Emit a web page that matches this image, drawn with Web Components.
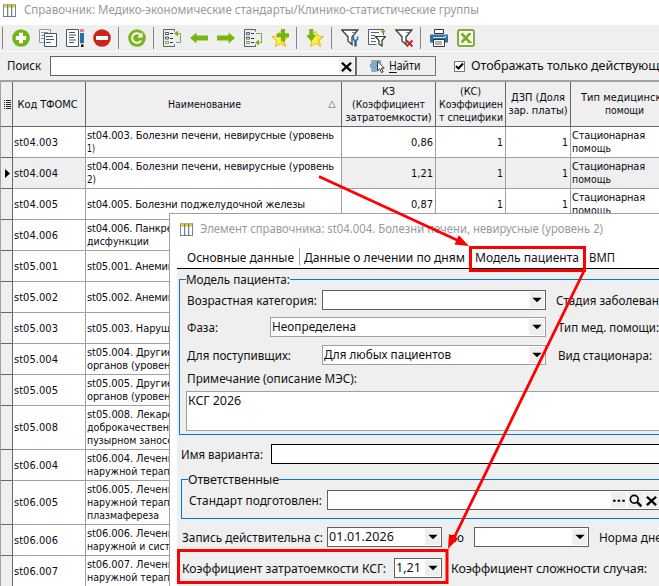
<!DOCTYPE html>
<html lang="ru">
<head>
<meta charset="utf-8">
<title>Справочник</title>
<style>
html,body{margin:0;height:100%;overflow:hidden;background:#fff}
</style>
</head>
<body>
<ref-app></ref-app>
<script>
/* Text run adjusted to a given width: tracked out when short, condensed when long */
class FitText extends HTMLElement{
  constructor(){
    super();
    this.attachShadow({mode:'open'}).innerHTML='<style>:host{display:inline-block;white-space:pre;vertical-align:top}span{display:inline-block;transform-origin:0 50%}</style><span><slot></slot></span>';
  }
  connectedCallback(){
    const w=+this.getAttribute('w');
    if(!w)return;
    const s=this.shadowRoot.querySelector('span');
    const n=s.getBoundingClientRect().width, d=(w-n)/this.textContent.length;
    if(d>-.2){s.style.letterSpacing=d+'px';}
    else{
      s.style.transform='scaleX('+w/n+')';
      s.style.marginRight=(w-n)+'px';
    }
  }
}

const LIST='<path d="M.5 .5h11M.5 .5v17h11" fill="none" stroke="#4f6272"/><path d="M2.500 3.500h3v2h-3zM2.500 8h3v2h-3z" fill="#fff" stroke="#555"/><path d="M2.500 12.500h3v2h-3z" fill="#fff" stroke="#79a52c"/><path d="M7 4.500h3M7 9.500h3M7 13.500h3" stroke="#333"/><path d="M11.500 .5v2M11.500 15.500v2" stroke="#4f6272"/>';
const STAR='<path d="M9.500 2l2.300 5 5.700.6-4.200 3.900 1.200 6-5-3-5 3 1.200-6L1 7.600l5.700-.6z" fill="#fff04a" stroke="#e6b91e"/><path d="M15 8.500l-3 2.500 1 5-3.500-2" fill="none" stroke="#f0c93a"/>';
const FUN='<path d="M.8 1h16L11 8v7.500L7 12V8z" fill="#fff" stroke="#3b3b3b" stroke-width="1.300"/><path d="M4 3.500l4 4.500M11 3.500h3" stroke="#888" fill="none"/>';
const ICONS={
  table:'<path d="M.5 .5h17v17H.5z" fill="#fff" stroke="#5e7f97"/><path d="M1 1h16v4H1z" fill="#efc83a"/><path d="M6.500 1v16.500M12 1v16.500" stroke="#4d7391" stroke-width="1.500"/><path d="M0 17.300h18M.5 1v16M17.500 1v16" stroke="#4d7391"/>',
  add:'<circle cx="9" cy="9" r="8.800" fill="#71b516"/><path d="M9 3.800v10.400M3.800 9h10.400" stroke="#fff" stroke-width="4"/>',
  copy:'<path d="M.5 .5h11v13H.5z" fill="#f5f5f5" stroke="#8997a2"/><path d="M2 3.500h7M2 6.500h3M2 9.500h3" stroke="#8997a2"/><path d="M5.500 4.500h12v13h-12z" fill="#fff" stroke="#41566a"/><path d="M7 7.500h7M7 10.500h8M7 13.500h5" stroke="#41566a"/>',
  edit:'<path d="M.5 .5h12v17H.5z" fill="#fff" stroke="#41566a"/><path d="M3 3.500h6M3 6h7M3 8.500h5M3 11h7M3 13.500h5" stroke="#41566a"/><path d="M14 0h4v3h-4z" fill="#e8837e"/><path d="M14 4h4v10h-4z" fill="#256fa8"/><path d="M14 14h4l-2 2z" fill="#d9c29c"/><path d="M15 15.500h2.500v2.500H15z" fill="#111"/>',
  del:'<circle cx="9" cy="9" r="8.800" fill="#ca2519"/><path d="M3 9h12" stroke="#fff" stroke-width="4"/>',
  refresh:'<circle cx="9" cy="9" r="8.800" fill="#79b51c"/><path d="M13 11.500A4.800 4.800 0 1 1 12.300 5.600" fill="none" stroke="#fff" stroke-width="2"/><path d="M14.500 3.200v5.300H9.200z" fill="#fff"/>',
  listl:LIST+'<path d="M13 4.500h4.500v9H13" fill="none" stroke="#7fa843"/><path d="M11 4.500l4-3v6z" fill="#7fb11d"/>',
  left:'<path d="M0 9l6.500-5.500v3H18v5H6.500v3z" fill="#78b511"/>',
  right:'<path d="M18 9l-6.500-5.500v3H0v5h11.500v3z" fill="#78b511"/>',
  listr:LIST+'<path d="M12 4.500h5.500v9H13" fill="none" stroke="#7fa843"/><path d="M11 13.500l4-3v6z" fill="#7fb11d"/>',
  staradd:STAR+'<path d="M12 0v12.500M5.700 6.200h12.500" stroke="#72b515" stroke-width="4"/>',
  stardown:STAR+'<path d="M3.300 0h4v6h3L5.300 12.500 .3 6h3z" fill="#72b515"/>',
  funset:FUN+'<path d="M12.500 7.500v3l1.500 1v6M16.500 7.500v3l-1.500 1v6" fill="none" stroke="#286c9c" stroke-width="1.500"/>',
  funlist:'<path d="M15.500 6V.5H.5v15h8" fill="#fff" stroke="#4f6272"/><path d="M3 3.500h8M3 6.500h4M3 9.500h4M3 12.500h5" stroke="#4f6272"/><path d="M12 1.500h6l-3 3.500z" fill="#7fb11d"/><path d="M7.500 7.500h10l-3.500 4v5.500l-3-2v-3.500z" fill="#fff" stroke="#333" stroke-width="1.200"/>',
  fundel:FUN+'<path d="M11.500 11.500l6 6M17.500 11.500l-6 6" stroke="#c52b22" stroke-width="2"/>',
  print:'<path d="M4.500 .5h9v4h-9z" fill="#fff" stroke="#333"/><path d="M0 5.500h18v8H0z" fill="#2c73a7"/><path d="M3 8.500h12" stroke="#fff" stroke-width=".8"/><path d="M3.500 10.500h11v7h-11z" fill="#fff" stroke="#333"/><path d="M5 13h7M5 15h7" stroke="#666"/><circle cx="15.500" cy="7.500" r=".8" fill="#fff"/>',
  excel:'<rect x="1" y="1" width="16" height="16" rx="2" fill="#fff" stroke="#82ad3b" stroke-width="2"/><path d="M4.500 4.500l8.500 9M13 4.500l-8.500 9" stroke="#71b31a" stroke-width="2.600"/><path d="M11 13.500h4M11.500 4.500H14" stroke="#71b31a"/>',
  find:'<path d="M2 3h10v3H2zM0 7h8v3H0zM2 11h5v4H2z" fill="#8fb7d1" stroke="#5688a9" stroke-width=".8"/><path d="M8.500 3.500v11l2.500-2.300 2 4.300 1.800-1-2-4h3.200z" fill="#fff" stroke="#333" stroke-width="1.100"/>',
  cross:'<path d="M3.500 4.500l11 10M14.500 4.500l-11 10" stroke="#000" stroke-width="2.800"/>',
  lens:'<circle cx="7.500" cy="7.500" r="4.700" fill="none" stroke="#000" stroke-width="2"/><path d="M11 11l5 5" stroke="#000" stroke-width="3"/>',
  dots:'<path d="M2.500 8h3v2.500h-3zM8 8h3v2.500H8zM13.500 8h3v2.500h-3z"/>',
  down:'<path d="M3 6h12l-6 6z"/>'
};
class UiIcon extends HTMLElement{
  constructor(){super();this.attachShadow({mode:'open'});}
  connectedCallback(){
    const s=this.getAttribute('size')||18;
    this.shadowRoot.innerHTML=`<style>:host{display:block;flex:none;width:${s}px;height:${s}px}svg{display:block}</style><svg width="${s}" height="${s}" viewBox="0 0 18 18">${ICONS[this.getAttribute('name')]}</svg>`;
  }
}

/* Text or drop-down field */
class UiField extends HTMLElement{
  constructor(){
    super();
    const b=(this.getAttribute('buttons')||'').split(' ').filter(Boolean);
    this.attachShadow({mode:'open'}).innerHTML=`<style>
      :host{display:flex;box-sizing:border-box;height:20px;border:1px solid var(--edge,#606060);background:#fff;align-items:center;padding:0 1px 0 0;overflow:hidden}
      .t{flex:1;min-width:0;padding-left:1px;line-height:18px;height:18px;margin-top:-1px}
      .b{width:15px;height:16px;background:#efefef;display:grid;place-items:center;margin-left:1.500px}
    </style><div class="t"><slot></slot></div>${b.map(n=>`<div class="b"><ui-icon name="${n}" size="${n==='down'?14:15}"></ui-icon></div>`).join('')}`;
  }
}

class GroupBox extends HTMLElement{
  constructor(){
    super();
    this.attachShadow({mode:'open'}).innerHTML=`<style>
      :host{display:block}
      .h{display:flex;height:15px;align-items:center;line-height:15px}
      .a{box-sizing:border-box;width:7px;height:8px;align-self:flex-end;border:solid #0078d7;border-width:1px 0 0 1px}
      .r{box-sizing:border-box;flex:1;height:8px;align-self:flex-end;border-top:1px solid #0078d7}
      .c{box-sizing:border-box;height:var(--h);border:solid #0078d7;border-width:0 0 1px 1px;padding-top:3px}
    </style><div class="h"><div class="a"></div><slot name="legend"></slot><div class="r"></div></div><div class="c"><slot></slot></div>`;
  }
}

class ToolBar extends HTMLElement{
  constructor(){
    super();
    const names='| add copy edit del | refresh | listl left right listr staradd | stardown | funset funlist fundel | print excel'.split(' ');
    this.attachShadow({mode:'open'}).innerHTML=`<style>
      :host{display:flex;box-sizing:border-box;height:27px;background:#efefef;border-bottom:1px solid #fff;gap:9px;padding-left:4px;align-items:center}
      i{width:1px;height:22px;background:#858585;margin-left:-2px}
    </style>${names.map(n=>n==='|'?'<i></i>':`<ui-icon name="${n}"></ui-icon>`).join('')}`;
  }
}

class SearchRow extends HTMLElement{
  constructor(){
    super();
    this.attachShadow({mode:'open'}).innerHTML=`<style>
      :host{display:flex;height:28px;background:#efefef;padding-left:7px;font:12.500px/20px "Noto Sans",sans-serif;align-items:center;color:#111;white-space:nowrap}
      .l,ui-field,.btn,.chk,fit-text{flex:none}
      .l{width:43px}
      ui-field{width:306px}
      .btn{box-sizing:border-box;width:80px;height:20px;border:1px solid #777;display:flex;align-items:center;padding-left:13px;gap:3px;line-height:18px}
      .chk{box-sizing:border-box;width:11px;height:11px;border:1px solid #777;background:#fff;margin:0 6px 0 18px}
      svg{display:block} u{text-underline-offset:2px}
    </style><div class="l"><fit-text w="34">Поиск</fit-text></div><ui-field buttons="cross"></ui-field>
    <div class="btn"><ui-icon name="find" size="16"></ui-icon><fit-text w="31.500"><u>Н</u>айти</fit-text></div>
    <div class="chk"><svg width="9" height="9" viewBox="0 0 9 9"><path d="M1 4l2.500 2.500L8 1.500" fill="none" stroke="#000" stroke-width="2"/></svg></div>
    <fit-text w="203">Отображать только действующие</fit-text>`;
  }
}

const ROWS=[
 ['st04.003',[['st04.003. Болезни печени, невирусные (уровень',247],['1)',8]],'0,86',31],
 ['st04.004',[['st04.004. Болезни печени, невирусные (уровень',247],['2)',9]],'1,21',31,1],
 ['st04.005',[['st04.005. Болезни поджелудочной железы',218]],'0,87',31],
 ['st04.006',[['st04.006. Панкреатит,',112],['дисфункции',62]],'',31],
 ['st05.001',[['st05.001. Анемии',87]],'',31],
 ['st05.002',[['st05.002. Анемии',87]],'',31],
 ['st05.003',[['st05.003. Наруш',83]],'',31],
 ['st05.004',[['st05.004. Другие',86],['органов (уровень',89]],'',31],
 ['st05.005',[['st05.005. Другие',86],['органов (уровень',89]],'',31],
 ['st05.008',[['st05.008. Лекарс',86],['доброкачествен',82],['пузырном заносе',86]],'',44],
 ['st06.004',[['st06.004. Лечение',93],['наружной терапии',95]],'',31],
 ['st06.005',[['st06.005. Лечение',93],['наружной терапии',95],['плазмафереза',72]],'',44],
 ['st06.006',[['st06.006. Лечение',93],['наружной и сист',83]],'',31],
 ['st06.007',[['st06.007. Лечение',93],['наружной терапии',95]],'',31]
];
const ft=(t,w)=>`<fit-text w="${w}">${t}</fit-text>`;
class DataGrid extends HTMLElement{
  constructor(){
    super();
    const head=[[['Код ТФОМС',60]],[['Наименование',73]],[['КЗ',13],['(Коэффициент',73],['затратоемкости)',86]],[['(КС)',21],['Коэффициен',64],['т специфики',64]],[['ДЗП (Доля',54],['зар. платы)',59]],[['Тип медицинской',93],['помощи',39]]];
    this.attachShadow({mode:'open'}).innerHTML=`<style>
      :host{display:block;width:700px;border-top:2px solid #a0a0a0;border-left:1px solid #a0a0a0;font:11px/13px "DejaVu Sans Condensed","DejaVu Sans",sans-serif;color:#0a0a14}
      .r{display:grid;grid-template-columns:12px 73px 256px 94px 70px 65px 1fr}
      .r>div{box-sizing:border-box;border:solid #a0a0a0;border-width:0 1px 1px 0;display:flex;flex-direction:column;justify-content:center;padding:0 2px 0 1px;min-width:0;overflow:hidden;align-items:flex-start}
      .r>.n{align-items:flex-end}
      .r>.s{background:#efefef;border-color:#696969;align-items:center;padding:0}
      .r>.s.c{padding-left:2px}
      .h{height:45px;background:#efefef}
      .h>div{border-color:#696969;align-items:center;padding:0;position:relative}
      .h>div:nth-child(2){padding-right:3px}
      .h>div:nth-child(3){padding-right:19px}
      .h>div:last-child{align-items:flex-start;padding-left:10px}
      .h>div:last-child fit-text+fit-text{margin-left:24px}
      .sel{background:#efefef}.sel>:nth-child(3){background:#fff}
      fit-text{height:13px}
      .sort{position:absolute;right:5px;top:18px}
    </style>
    <div class="r h"><div class="s"><svg width="8" height="9"><path d="M1 .5h1M3 .5h5M1 2.500h1M3 2.500h5M1 4.500h1M3 4.500h5M1 6.500h1M3 6.500h5M1 8.500h1M3 8.500h5" stroke="#222"/></svg></div>${head.map((c,i)=>`<div>${c.map(a=>ft(...a)).join('')}${i===1?'<svg class="sort" width="8" height="8"><path d="M.7 7.500L4 1l3.300 6.500z" fill="none" stroke="#999"/></svg>':''}</div>`).join('')}</div>
    ${ROWS.map(r=>`<div class="r${r[4]?' sel':''}" style="height:${r[3]}px"><div class="s c">${r[4]?'<svg width="5" height="9"><path d="M0 0l5 4.500L0 9z"/></svg>':''}</div><div>${ft(r[0],44)}</div><div>${r[1].map(a=>ft(...a)).join('')}</div><div class="n">${r[2]?ft(r[2],22):''}</div><div class="n">${r[2]?ft('1',6):''}</div><div class="n">${r[2]?ft('1',6):''}</div><div>${r[2]?ft('Стационарная',73)+ft('помощь',39):''}</div></div>`).join('')}`;
  }
}

class RefDialog extends HTMLElement{
  constructor(){
    super();
    this.attachShadow({mode:'open'}).innerHTML=`<style>
      :host{display:block;box-sizing:border-box;border:solid #a0a0a0;border-width:1px 0 0 1px;background:#fff;font:12.500px/20px "Noto Sans",sans-serif;color:#111;overflow:hidden;white-space:nowrap}
      .title{display:flex;height:30px;align-items:center;padding-left:10px;gap:7px;color:#999;font-size:12.500px}
      .tabs{display:flex;margin-left:7px;border-bottom:1px solid #000;padding:3px 0 0 10px;align-items:center;box-sizing:border-box;height:25px}
      .tabs i{width:1px;height:17px;background:#a0a0a0;margin:-3px 4px 0 5px}
      .body{margin-left:7px;background:#efefef;height:330px;padding-top:3px;width:500px}
      .row{display:grid;height:20px;align-items:center}
      .row>fit-text{padding-top:2px;line-height:18px}
      .dim{--edge:#a0a0a0}
      .note{box-sizing:border-box;height:40px;margin-left:6px;border:1px solid #a0a0a0;background:#fff;padding-left:1px;line-height:17px}
    </style>
    <div class="title"><ui-icon name="table" size="13"></ui-icon><fit-text w="403">Элемент справочника: st04.004. Болезни печени, невирусные (уровень 2)</fit-text></div>
    <div class="tabs"><fit-text w="107">Основные данные</fit-text><i></i><fit-text w="161">Данные о лечении по дням</fit-text><fit-text w="104" style="margin-left:10px">Модель пациента</fit-text><fit-text w="26" style="margin-left:10px">ВМП</fit-text></div>
    <div class="body">
      <group-box style="margin-left:2px;--h:148px"><fit-text slot="legend" w="104">Модель пациента:</fit-text>
        <div class="row" style="grid-template-columns:135px 224px 1fr;padding-left:7px"><fit-text w="130">Возрастная категория:</fit-text><ui-field buttons="down"></ui-field><fit-text w="120" style="margin-left:10px">Стадия заболевания:</fit-text></div>
        <div class="row dim" style="grid-template-columns:83px 276px 1fr;padding-left:7px;margin-top:7px"><fit-text w="31">Фаза:</fit-text><ui-field buttons="down"><fit-text w="84">Неопределена</fit-text></ui-field><fit-text w="101" style="margin-left:12px">Тип мед. помощи:</fit-text></div>
        <div class="row dim" style="grid-template-columns:135px 224px 1fr;padding-left:7px;margin-top:8px"><fit-text w="104">Для поступивщих:</fit-text><ui-field buttons="down"><fit-text w="127">Для любых пациентов</fit-text></ui-field><fit-text w="94" style="margin-left:12px">Вид стационара:</fit-text></div>
        <div class="row" style="height:26px;padding-left:7px"><fit-text w="170">Примечание (описание МЭС):</fit-text></div>
        <div class="note"><fit-text w="53">КСГ 2026</fit-text></div>
      </group-box>
      <div class="row" style="grid-template-columns:90px 1fr;padding-left:4px;margin-top:9px;--edge:#000"><fit-text w="82">Имя варианта:</fit-text><ui-field></ui-field></div>
      <group-box style="margin:8px 0 0 4px;--h:32px"><fit-text slot="legend" w="91">Ответственные</fit-text>
        <div class="row" style="grid-template-columns:138px 334px;padding-left:7px"><fit-text w="133">Стандарт подготовлен:</fit-text><ui-field buttons="dots lens cross"></ui-field></div>
      </group-box>
      <div class="row" style="grid-template-columns:145px 115px 32px 115px 1fr;padding-left:5px;margin-top:8px"><fit-text w="141">Запись действительна с:</fit-text><ui-field buttons="down"><fit-text w="65">01.01.2026</fit-text></ui-field><fit-text w="14" style="margin-left:8px">по</fit-text><ui-field buttons="down"></ui-field><fit-text w="70" style="margin-left:10px">Норма дней</fit-text></div>
      <div class="row" style="grid-template-columns:212px 48px 1fr;padding-left:5px;margin-top:11px"><fit-text w="204">Коэффициент затратоемкости КСГ:</fit-text><ui-field buttons="down"><fit-text w="25">1,21</fit-text></ui-field><fit-text w="196" style="margin-left:9px">Коэффициент сложности случая:</fit-text></div>
    </div>`;
  }
}

class RefMarks extends HTMLElement{
  constructor(){
    super();
    this.attachShadow({mode:'open'}).innerHTML=`<style>:host{display:block}svg{display:block}</style>
    <svg width="659" height="586" viewBox="0 0 659 586" fill="none" stroke="#f00" stroke-width="3">
      <rect x="470.500" y="247.500" width="114" height="23"/><rect x="178.500" y="550.500" width="268.500" height="32"/>
      <path d="M319 176.500L458 240.500M584 271L453 540" stroke-width="2.800"/>
      <path d="M469 246l-14.500-1.500 4.300-9.200zM448 549l1-15 9.200 4.500z" fill="#f00" stroke="none"/>
    </svg>`;
  }
}

class RefApp extends HTMLElement{
  constructor(){
    super();
    this.attachShadow({mode:'open'}).innerHTML=`<style>
      :host{display:block;position:relative;width:659px;height:586px;overflow:hidden;background:#fff}
      .title{display:flex;height:20px;padding:0 0 5px 3px;align-items:center;gap:8px;color:#999;font:12.500px/20px "Noto Sans",sans-serif}
      ref-dialog{position:absolute;left:169px;top:213px;width:490px;height:373px}
      ref-marks{position:absolute;left:0;top:0}
    </style>
    <div class="title"><ui-icon name="table" size="13"></ui-icon><fit-text w="455">Справочник: Медико-экономические стандарты/Клинико-статистические группы</fit-text></div>
    <tool-bar></tool-bar><search-row></search-row><data-grid></data-grid>
    <ref-dialog></ref-dialog><ref-marks></ref-marks>`;
  }
}
customElements.define('fit-text',FitText);
customElements.define('ui-icon',UiIcon);
customElements.define('ui-field',UiField);
customElements.define('group-box',GroupBox);
customElements.define('tool-bar',ToolBar);
customElements.define('search-row',SearchRow);
customElements.define('data-grid',DataGrid);
customElements.define('ref-dialog',RefDialog);
customElements.define('ref-marks',RefMarks);
customElements.define('ref-app',RefApp);
</script>
</body>
</html>
